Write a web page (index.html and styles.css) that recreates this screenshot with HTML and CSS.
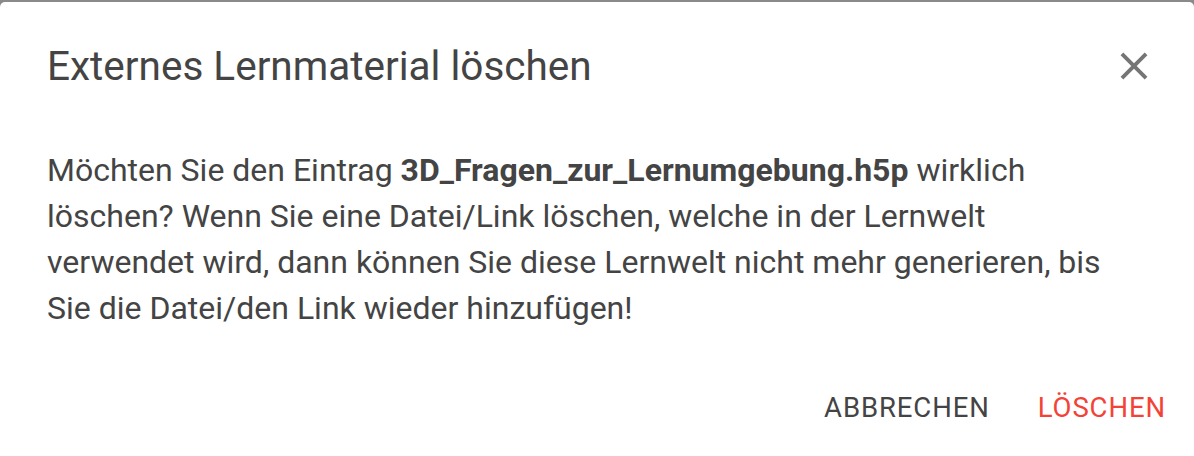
FILE: index.html
```html
<!DOCTYPE html>
<html lang="de">
<head>
<meta charset="utf-8">
<title>Externes Lernmaterial löschen</title>
<link rel="stylesheet" href="styles.css">
</head>
<body>
<div class="dialog">
  <div class="dialog-header">
    <h2 class="dialog-title">Externes Lernmaterial löschen</h2>
    <button class="close-btn" aria-label="Schließen">
      <svg viewBox="0 0 24 24" width="46" height="46"><path d="M19 6.41L17.59 5 12 10.59 6.41 5 5 6.41 10.59 12 5 17.59 6.41 19 12 13.41 17.59 19 19 17.59 13.41 12z" fill="currentColor"/></svg>
    </button>
  </div>
  <div class="dialog-body">
    <p>Möchten Sie den Eintrag <strong>3D_Fragen_zur_Lernumgebung.h5p</strong> wirklich löschen? Wenn Sie eine Datei/Link löschen, welche in der Lernwelt verwendet wird, dann können Sie diese Lernwelt nicht mehr generieren, bis Sie die Datei/den Link wieder hinzufügen!</p>
  </div>
  <div class="dialog-actions">
    <button class="text-btn">Abbrechen</button>
    <button class="text-btn danger">Löschen</button>
  </div>
</div>
</body>
</html>
```

FILE: styles.css
```css
html, body {
  margin: 0;
  padding: 0;
  height: 100%;
}
body {
  background: #8a8a8a;
  font-family: Roboto, "Liberation Sans", sans-serif;
  color: #444;
  overflow: hidden;
}
.dialog {
  margin-top: 2px;
  background: #fff;
  border-radius: 5px 5px 0 0;
  height: calc(100% - 2px);
  box-sizing: border-box;
}
.dialog-header {
  display: flex;
  align-items: center;
  justify-content: space-between;
  padding: 40px 37px 0 47px;
}
.dialog-title {
  margin: 0;
  font-size: 40.5px;
  line-height: 48px;
  font-weight: 400;
  color: #444;
}
.close-btn {
  border: 0;
  background: none;
  padding: 0;
  width: 46px;
  height: 46px;
  color: #757575;
  display: flex;
}
.dialog-body {
  padding: 57px 86px 0 47px;
}
.dialog-body p {
  margin: 0;
  font-size: 32px;
  line-height: 46px;
}
.dialog-body strong {
  font-weight: 700;
}
.dialog-actions {
  display: flex;
  justify-content: flex-end;
  gap: 16px;
  padding: 55px 12px 0 0;
}
.text-btn {
  font-family: Roboto, "Liberation Sans", sans-serif;
  border: 0;
  background: none;
  text-transform: uppercase;
  font-size: 27.5px;
  letter-spacing: 0.9px;
  line-height: 44px;
  padding: 0 16px;
  color: #444;
}
.text-btn.danger {
  color: #f44336;
}
```
